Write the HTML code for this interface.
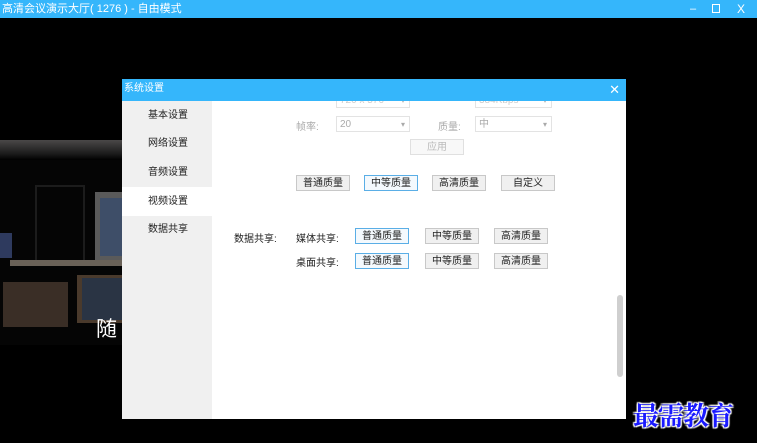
<!DOCTYPE html>
<html><head><meta charset="utf-8"><style>
*{margin:0;padding:0;box-sizing:border-box}
body{width:757px;height:443px;background:#000;position:relative;overflow:hidden;font-family:"Liberation Sans","Noto Sans CJK SC",sans-serif;font-size:10px;color:#333}
.a{position:absolute}
.tb{left:0;top:0;width:757px;height:18px;background:#35b6fb;color:#fff;font-size:11px;line-height:18px;padding-left:2px}
.btn{position:absolute;height:16px;border:1px solid #c8c8c8;background:#f0f0f0;text-align:center;line-height:16px;font-size:10px;color:#222}
.btn.s{border-color:#5aaee6;background:#f4f9fd}
.sel{position:absolute;height:16px;border:1px solid #e3e3e3;background:#fff;color:#aaa;font-size:10px;line-height:15px;padding-left:3px}
.sel:after{content:"▾";position:absolute;right:4px;top:0;color:#aaa;font-size:8px}
.lbl{position:absolute;font-size:10px;color:#222}
.nav{position:absolute;left:0;width:90px;height:29px;line-height:29px;padding-left:26px;font-size:10px;color:#222}
</style></head><body>
<div class="a tb">高清会议演示大厅( 1276 ) - 自由模式
<span class="a" style="left:690px;top:0;font-size:11px">–</span>
<span class="a" style="left:712px;top:4px;width:8px;height:9px;border:1px solid #fff"></span>
<span class="a" style="left:737px;top:0;font-size:12px">X</span></div>
<!-- photo -->
<div class="a" style="left:0;top:140px;width:122px;height:20px;background:linear-gradient(#4a4848,#1a1a1a 70%,#000)"></div>
<div class="a" style="left:0;top:160px;width:122px;height:185px;background:#050505"></div>
<div class="a" style="left:35px;top:185px;width:50px;height:80px;border:2px solid #1c1c1c"></div>
<div class="a" style="left:95px;top:192px;width:27px;height:70px;background:#5a5a5a"></div>
<div class="a" style="left:100px;top:198px;width:22px;height:58px;background:#3e4e68"></div>
<div class="a" style="left:0;top:233px;width:12px;height:25px;background:#2e3a5e"></div>
<div class="a" style="left:10px;top:260px;width:112px;height:6px;background:#6a6258"></div>
<div class="a" style="left:3px;top:282px;width:65px;height:45px;background:#3a2e26"></div>
<div class="a" style="left:77px;top:275px;width:45px;height:48px;background:#4a3a2c"></div>
<div class="a" style="left:82px;top:278px;width:40px;height:42px;background:#2a3444"></div>
<div class="a" style="left:96px;top:313px;color:#fff;font-size:21px">随</div>
<!-- dialog -->
<div class="a" style="left:122px;top:79px;width:504px;height:340px;background:#fff">
 <div class="a" style="left:0;top:22px;width:90px;height:318px;background:#f0f0f0"></div>
 <div class="nav" style="top:22px">基本设置</div>
 <div class="nav" style="top:50px">网络设置</div>
 <div class="nav" style="top:79px">音频设置</div>
 <div class="nav" style="top:108px;background:#fff">视频设置</div>
 <div class="nav" style="top:136px">数据共享</div>
 <div class="a" style="left:495px;top:216px;width:6px;height:82px;background:#cfcfcf;border-radius:3px"></div>
</div>
<div class="sel" style="left:336px;top:92px;width:74px;color:#ccc">720 x 576</div>
<div class="sel" style="left:475px;top:92px;width:77px;color:#ccc">384Kbps</div>
<div class="a" style="left:122px;top:79px;width:504px;height:22px;background:#35b6fb;color:#fff;font-size:10px;line-height:20px;padding-left:2px">系统设置<span class="a" style="right:6px;top:1px;font-size:13px">✕</span></div>
<div class="lbl" style="left:296px;top:118px;color:#aaa">帧率:</div>
<div class="sel" style="left:336px;top:116px;width:74px">20</div>
<div class="lbl" style="left:438px;top:118px;color:#aaa">质量:</div>
<div class="sel" style="left:475px;top:116px;width:77px">中</div>
<div class="btn" style="left:410px;top:139px;width:54px;color:#bbb;border-color:#e0e0e0;background:#f8f8f8">应用</div>
<div class="btn" style="left:296px;top:175px;width:54px">普通质量</div>
<div class="btn s" style="left:364px;top:175px;width:54px">中等质量</div>
<div class="btn" style="left:432px;top:175px;width:54px">高清质量</div>
<div class="btn" style="left:501px;top:175px;width:54px">自定义</div>
<div class="lbl" style="left:234px;top:230px">数据共享:</div>
<div class="lbl" style="left:296px;top:230px">媒体共享:</div>
<div class="btn s" style="left:355px;top:228px;width:54px">普通质量</div>
<div class="btn" style="left:425px;top:228px;width:54px">中等质量</div>
<div class="btn" style="left:494px;top:228px;width:54px">高清质量</div>
<div class="lbl" style="left:296px;top:254px">桌面共享:</div>
<div class="btn s" style="left:355px;top:253px;width:54px">普通质量</div>
<div class="btn" style="left:425px;top:253px;width:54px">中等质量</div>
<div class="btn" style="left:494px;top:253px;width:54px">高清质量</div>
<div class="a" style="left:633px;top:396px;font-family:'Noto Serif CJK SC',serif;font-weight:bold;font-size:26px;color:#1a1aff;letter-spacing:-1px;text-shadow:0 0 2px #fff,0 0 2px #fff,1px 1px 1px #fff,-1px -1px 1px #fff,1px -1px 1px #fff,-1px 1px 1px #fff">最需教育</div>
</body></html>
